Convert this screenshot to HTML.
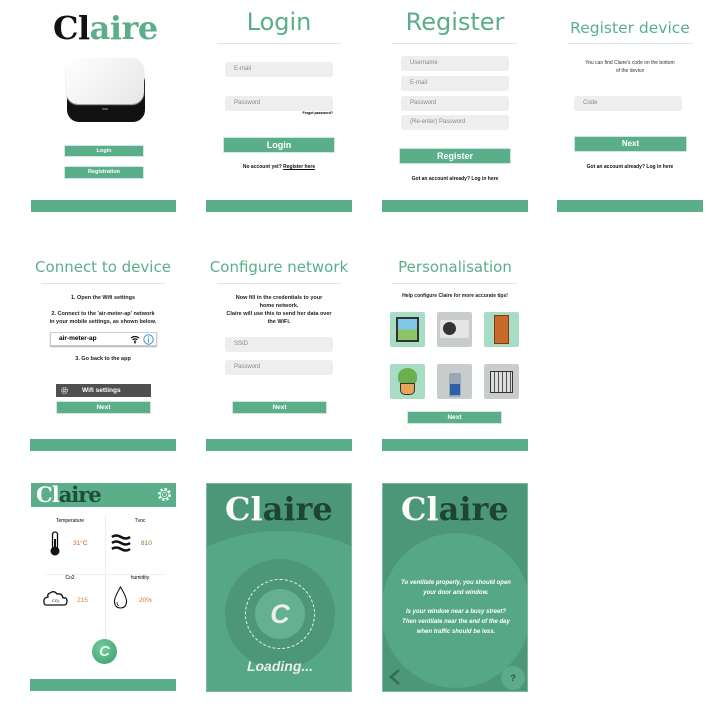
<!DOCTYPE html>
<html><head><meta charset="utf-8"><style>
*{margin:0;padding:0;box-sizing:border-box}
html{width:720px;height:710px;overflow:hidden}
body{width:720px;height:710px;background:#fff;position:relative;overflow:hidden;font-family:"Liberation Sans",sans-serif}
.a{position:absolute}
.bar{position:absolute;height:12px;background:#5aaf8a}
.btn{position:absolute;background:#5aaf8a;color:#fff;font-weight:bold;text-align:center;border:1px solid #cfe7dc}
.in{position:absolute;background:#eeeeee;border-radius:3px;color:#888;font-size:6px;padding-left:9px}
.t{position:absolute;color:#5aaf8a;text-align:center;font-family:"DejaVu Sans",sans-serif}
.ln{position:absolute;height:1px;background:#dde9e4}
.s{position:absolute;text-align:center;font-size:5px;font-weight:bold;color:#111}
.c{position:absolute;font-size:6.5px;font-weight:bold;color:#222;text-align:center;line-height:8px}
.ic{position:absolute;width:35px;height:35px;border-radius:2px}
.serif{font-family:"DejaVu Serif","Liberation Serif",serif;font-weight:bold}
</style></head><body>

<!-- Panel 1 -->
<div class="a serif" style="left:53px;top:9px;font-size:32px;letter-spacing:-0.5px;color:#111">Cl<span style="color:#5aaf8a">aire</span></div>
<div class="a" style="left:67px;top:72px;width:78px;height:50px;background:#111;border-radius:6px 10px 12px 12px"></div>
<div class="a" style="left:66px;top:58px;width:78px;height:46px;background:linear-gradient(135deg,#fff,#e6e6e6);border-radius:12px;box-shadow:0 1px 1px #bbb"></div>
<div class="a" style="left:102px;top:108px;width:6px;height:2px;background:#555"></div>
<div class="btn" style="left:64px;top:145px;width:80px;height:12px;font-size:5.5px;line-height:10px">Login</div>
<div class="btn" style="left:64px;top:166px;width:80px;height:13px;font-size:5.5px;line-height:11px">Registration</div>
<div class="bar" style="left:31px;top:200px;width:145px"></div>

<!-- Panel 2 -->
<div class="t" style="left:206px;top:8px;width:146px;font-size:24px">Login</div>
<div class="ln" style="left:217px;top:43px;width:124px"></div>
<div class="in" style="left:225px;top:62px;width:108px;height:15px;line-height:15px">E-mail</div>
<div class="in" style="left:225px;top:96px;width:108px;height:15px;line-height:15px">Password</div>
<div class="a" style="left:290px;top:111px;width:43px;text-align:right;font-size:3.5px;font-weight:bold">Forgot password?</div>
<div class="btn" style="left:223px;top:137px;width:112px;height:16px;font-size:9px;line-height:14px">Login</div>
<div class="s" style="left:206px;top:164px;width:146px">No account yet? <u>Register here</u></div>
<div class="bar" style="left:206px;top:200px;width:146px"></div>

<!-- Panel 3 -->
<div class="t" style="left:382px;top:8px;width:146px;font-size:24px">Register</div>
<div class="ln" style="left:392px;top:43px;width:125px"></div>
<div class="in" style="left:401px;top:56px;width:108px;height:15px;line-height:15px">Username</div>
<div class="in" style="left:401px;top:76px;width:108px;height:15px;line-height:15px">E-mail</div>
<div class="in" style="left:401px;top:96px;width:108px;height:15px;line-height:15px">Password</div>
<div class="in" style="left:401px;top:115px;width:108px;height:15px;line-height:15px">(Re-enter) Password</div>
<div class="btn" style="left:399px;top:148px;width:112px;height:16px;font-size:9px;line-height:14px">Register</div>
<div class="s" style="left:382px;top:176px;width:146px">Got an account already? Log in here</div>
<div class="bar" style="left:382px;top:200px;width:146px"></div>

<!-- Panel 4 -->
<div class="t" style="left:557px;top:19px;width:146px;font-size:15.5px">Register device</div>
<div class="ln" style="left:568px;top:43px;width:125px"></div>
<div class="a" style="left:557px;top:59px;width:146px;text-align:center;font-size:5px;color:#333;line-height:8px">You can find Claire's code on the bottom<br>of the device</div>
<div class="in" style="left:574px;top:96px;width:108px;height:15px;line-height:15px">Code</div>
<div class="btn" style="left:574px;top:136px;width:113px;height:16px;font-size:8px;line-height:14px">Next</div>
<div class="s" style="left:557px;top:164px;width:146px">Got an account already? Log in here</div>
<div class="bar" style="left:557px;top:200px;width:146px"></div>

<!-- Panel 5 -->
<div class="t" style="left:24px;top:258px;width:158px;font-size:15px">Connect to device</div>
<div class="ln" style="left:41px;top:283px;width:124px"></div>
<div class="c" style="left:30px;top:294px;width:146px;font-size:5.5px">1. Open the Wifi settings</div>
<div class="c" style="left:30px;top:310px;width:146px;font-size:5.5px">2. Connect to the 'air-meter-ap' network<br>in your mobile settings, as shown below.</div>
<div class="a" style="left:50px;top:332px;width:107px;height:14px;border:1px solid #ccc;box-shadow:0 1px 1px #aaa;font-size:6.5px;font-weight:bold;padding-left:8px;line-height:12px">air-meter-ap
<svg class="a" style="left:79px;top:2px" width="10" height="9" viewBox="0 0 10 9"><path d="M1 3Q5 0 9 3M2.5 4.8Q5 3 7.5 4.8M4 6.5Q5 5.8 6 6.5" stroke="#111" fill="none" stroke-width="1.2"/><circle cx="5" cy="7.8" r=".8"/></svg>
<svg class="a" style="left:92px;top:1px" width="11" height="11"><circle cx="5.5" cy="5.5" r="4.7" fill="none" stroke="#3a8fd6" stroke-width="1"/><path d="M5.5 4.5V8.5" stroke="#3a8fd6"/><circle cx="5.5" cy="3" r=".6" fill="#3a8fd6"/></svg></div>
<div class="c" style="left:30px;top:355px;width:146px;font-size:5.5px">3. Go back to the app</div>
<div class="a" style="left:56px;top:384px;width:95px;height:13px;background:#505050;color:#fff;font-size:6.5px;font-weight:bold;line-height:13px;padding-left:26px">Wifi settings
<svg class="a" style="left:4px;top:2px" width="9" height="9" viewBox="0 0 10 10"><circle cx="5" cy="5" r="3.2" fill="none" stroke="#ddd" stroke-width="1.4" stroke-dasharray="1.5 1"/><circle cx="5" cy="5" r="1.3" fill="none" stroke="#ddd" stroke-width=".8"/></svg></div>
<div class="btn" style="left:56px;top:401px;width:95px;height:13px;font-size:6.5px;line-height:11px">Next</div>
<div class="bar" style="left:30px;top:439px;width:146px"></div>

<!-- Panel 6 -->
<div class="t" style="left:200px;top:258px;width:158px;font-size:15px">Configure network</div>
<div class="ln" style="left:217px;top:283px;width:124px"></div>
<div class="c" style="left:206px;top:294px;width:146px;font-size:5.5px">Now fill in the credentials to your<br>home network.<br>Claire will use this to send her data over<br>the WiFi.</div>
<div class="in" style="left:225px;top:337px;width:108px;height:15px;line-height:15px">SSID</div>
<div class="in" style="left:225px;top:360px;width:108px;height:15px;line-height:15px">Password</div>
<div class="btn" style="left:232px;top:401px;width:95px;height:13px;font-size:6.5px;line-height:11px">Next</div>
<div class="bar" style="left:206px;top:439px;width:146px"></div>

<!-- Panel 7 -->
<div class="t" style="left:376px;top:258px;width:158px;font-size:15px">Personalisation</div>
<div class="ln" style="left:392px;top:283px;width:125px"></div>
<div class="c" style="left:382px;top:292px;width:146px;font-size:5px">Help configure Claire for more accurate tips!</div>
<div class="ic" style="left:390px;top:312px;background:#a9dcc5"><div class="a" style="left:6px;top:5px;width:23px;height:25px;border:2px solid #333;background:linear-gradient(#7fc7e6 50%,#8bc566 50%)"></div></div>
<div class="ic" style="left:437px;top:312px;background:#c8cccc"><div class="a" style="left:3px;top:8px;width:29px;height:18px;background:#e4e6e6;border-radius:2px"></div><div class="a" style="left:6px;top:10px;width:13px;height:13px;border-radius:50%;background:#333"></div></div>
<div class="ic" style="left:484px;top:312px;background:#a9dcc5"><div class="a" style="left:10px;top:3px;width:15px;height:29px;background:#c96a2a;border:1px solid #7a3a12"></div></div>
<div class="ic" style="left:390px;top:364px;background:#a9dcc5"><div class="a" style="left:8px;top:4px;width:19px;height:16px;background:#6ab04c;border-radius:50% 50% 30% 30%"></div><div class="a" style="left:10px;top:19px;width:15px;height:12px;background:#e8a65c;border:1px solid #333;border-radius:0 0 5px 5px"></div></div>
<div class="ic" style="left:437px;top:364px;background:#c8cccc"><div class="a" style="left:12px;top:9px;width:12px;height:24px;background:#9aa8b4;border-radius:2px"></div><div class="a" style="left:13px;top:20px;width:10px;height:11px;background:#2f5fa8"></div></div>
<div class="ic" style="left:484px;top:364px;background:#c8cccc"><div class="a" style="left:6px;top:7px;width:23px;height:22px;border:1.5px solid #333;background:repeating-linear-gradient(90deg,#ddd 0 3px,#555 3px 4px)"></div></div>
<div class="btn" style="left:407px;top:411px;width:95px;height:13px;font-size:6.5px;line-height:11px">Next</div>
<div class="bar" style="left:382px;top:439px;width:146px"></div>

<!-- Panel 9 -->
<div class="a" style="left:31px;top:483px;width:145px;height:24px;background:#5aaf8a"></div>
<div class="a serif" style="left:36px;top:482px;font-size:21px;letter-spacing:-1px;color:#fff">Cl<span style="color:#1f4d3a">aire</span></div>
<svg class="a" style="left:156px;top:486px" width="17" height="17" viewBox="0 0 20 20"><circle cx="10" cy="10" r="6.5" fill="none" stroke="#fff" stroke-width="2.5" stroke-dasharray="2.6 2.5"/><circle cx="10" cy="10" r="5" fill="#5aaf8a" stroke="#fff" stroke-width=".8"/><circle cx="10" cy="10" r="2.3" fill="none" stroke="#fff" stroke-width=".8"/></svg>
<div class="a" style="left:105px;top:515px;width:1px;height:140px;background:#eee"></div>
<div class="a" style="left:45px;top:574px;width:120px;height:1px;background:#eee"></div>
<div class="a" style="left:40px;top:518px;width:60px;text-align:center;font-size:5px">Temperature</div>
<div class="a" style="left:110px;top:518px;width:60px;text-align:center;font-size:5px">Tvoc</div>
<div class="a" style="left:40px;top:575px;width:60px;text-align:center;font-size:5px">Co2</div>
<div class="a" style="left:110px;top:575px;width:60px;text-align:center;font-size:5px">humidity</div>
<svg class="a" style="left:49px;top:531px" width="12" height="26"><rect x="3.5" y="1" width="5" height="17" rx="2.5" fill="none" stroke="#111" stroke-width="1.3"/><circle cx="6" cy="20" r="4.5" fill="#111"/><rect x="5" y="8" width="2" height="10" fill="#111"/></svg>
<div class="a" style="left:73px;top:540px;font-size:6.5px;color:#c8622b">31°C</div>
<svg class="a" style="left:111px;top:534px" width="20" height="18"><path d="M1 3Q5 0 10 3T19 3M1 9Q5 6 10 9T19 9M1 15Q5 12 10 15T19 15" stroke="#111" stroke-width="2.5" fill="none"/></svg>
<div class="a" style="left:141px;top:540px;font-size:6.5px;color:#5a8f2e">810</div>
<svg class="a" style="left:42px;top:590px" width="26" height="17"><path d="M4 15H22Q25 15 25 11Q25 7 21 8Q20 3 15 4Q12 0 8 3Q5 4 6 7Q1 8 2 12Q2 15 4 15Z" fill="none" stroke="#111" stroke-width="1.3"/><text x="10" y="12" font-size="4" font-family="Liberation Sans">CO₂</text></svg>
<div class="a" style="left:77px;top:597px;font-size:6.5px;color:#e07c2a">215</div>
<svg class="a" style="left:113px;top:586px" width="15" height="24"><path d="M7.5 1Q1 12 1.5 16Q2 22 7.5 22Q13 22 13.5 16Q14 12 7.5 1Z" fill="none" stroke="#111" stroke-width="1.1"/><path d="M4 16Q4 19 6 20" stroke="#111" fill="none" stroke-width=".8"/></svg>
<div class="a" style="left:139px;top:597px;font-size:6.5px;color:#d9702a">20%</div>
<div class="a" style="left:92px;top:639px;width:25px;height:25px;border-radius:50%;background:radial-gradient(circle at 40% 35%,#6fcc9c,#3e9c6c);color:#e8f3ee;font-style:italic;font-weight:bold;font-size:15px;text-align:center;line-height:25px">C</div>
<div class="bar" style="left:30px;top:679px;width:146px"></div>

<!-- Panel 10 -->
<div class="a" style="left:206px;top:483px;width:146px;height:209px;background:#4b9777;overflow:hidden;border:1px solid #79b99d">
<div class="a serif" style="left:18px;top:6px;font-size:32px;letter-spacing:0px;color:#fff">Cl<span style="color:#1d4535">aire</span></div>
<div class="a" style="left:-80px;top:47px;width:306px;height:260px;border-radius:50%;background:#56a786"></div>
<div class="a" style="left:18px;top:75px;width:110px;height:110px;border-radius:50%;background:#4c9777"></div>
<div class="a" style="left:38px;top:95px;width:70px;height:70px;border-radius:50%;border:1px dashed #e6f2ec"></div>
<div class="a" style="left:48px;top:105px;width:50px;height:50px;border-radius:50%;background:#64b08f;color:#e9efec;font-style:italic;font-weight:bold;font-size:27px;text-align:center;line-height:50px">C</div>
<div class="a" style="left:0;top:174px;width:146px;text-align:center;color:#e5efe9;font-style:italic;font-weight:bold;font-size:14px">Loading...</div>
</div>

<!-- Panel 11 -->
<div class="a" style="left:382px;top:483px;width:146px;height:209px;background:#4b9777;overflow:hidden;border:1px solid #79b99d">
<div class="a serif" style="left:18px;top:6px;font-size:32px;letter-spacing:0px;color:#fff">Cl<span style="color:#1d4535">aire</span></div>
<div class="a" style="left:-2px;top:49px;width:150px;height:155px;border-radius:50%;background:#56a786"></div>
<div class="a" style="left:0;top:95px;width:146px;text-align:center;color:#fff;font-style:italic;font-weight:bold;font-size:6px;line-height:9.7px">To ventilate properly, you should open<br>your door and window.<br><br>Is your window near a busy street?<br>Then ventilate near the end of the day<br>when traffic should be less.</div>
<svg class="a" style="left:6px;top:185px" width="12" height="16"><path d="M10 1L2 8L10 15" stroke="#356b55" stroke-width="2.5" fill="none"/></svg>
<div class="a" style="left:118px;top:182px;width:24px;height:24px;border-radius:50%;background:#5cab8b;color:#2c5545;font-weight:bold;font-size:9px;text-align:center;line-height:24px">?</div>
</div>
</body></html>
